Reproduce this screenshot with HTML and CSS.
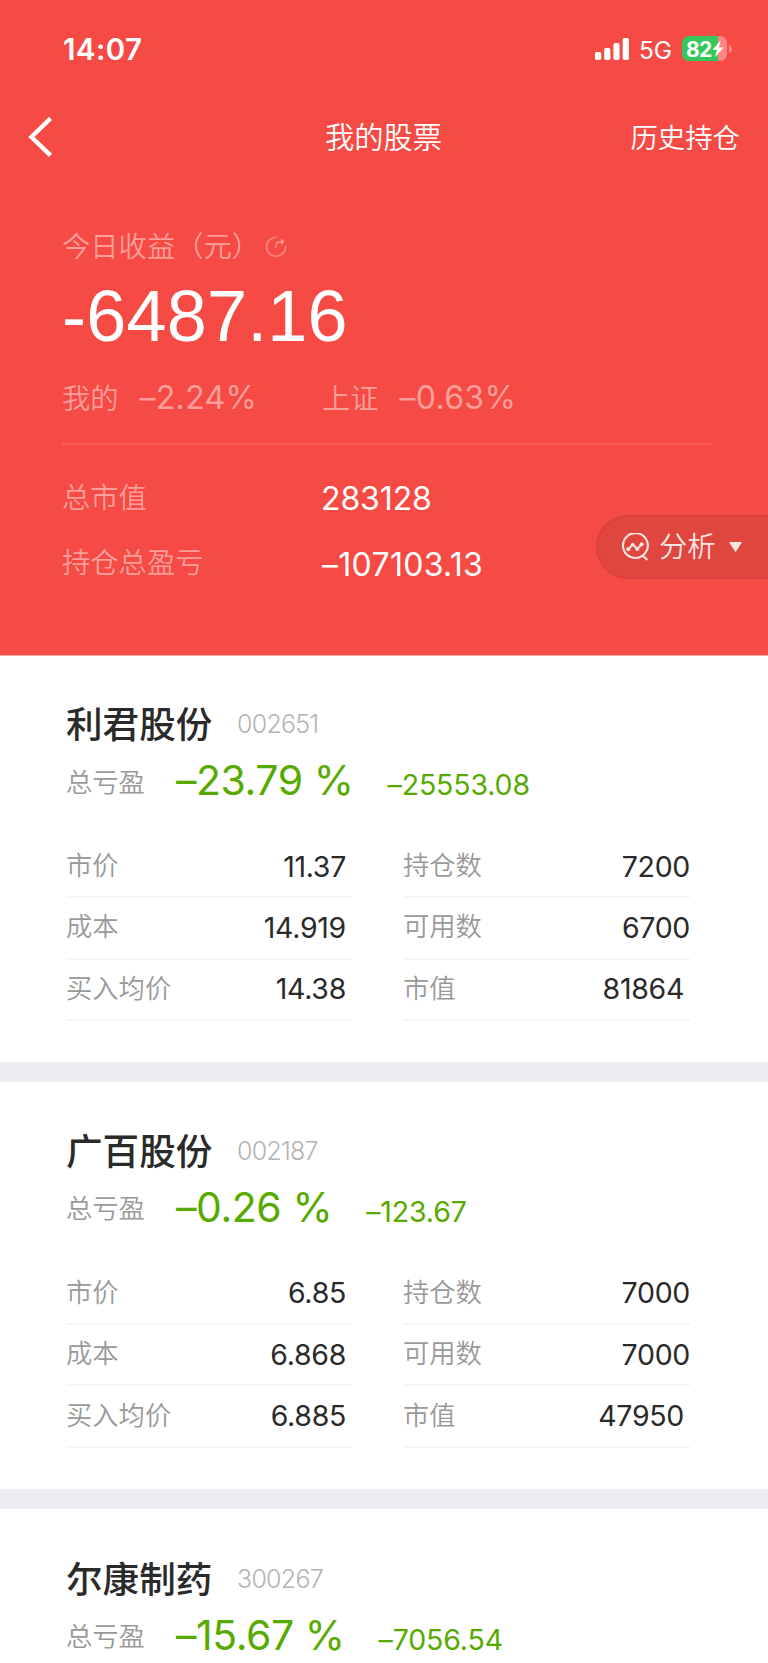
FILE: index.html
```html
<!DOCTYPE html>
<html lang="zh-CN">
<head>
<meta charset="utf-8">
<title>我的股票</title>
<link rel="stylesheet" href="styles.css">
</head>
<body>
<header class="hero">
  <div class="status">
    <span class="time">14:07</span>
    <svg class="signal" width="34" height="22" viewBox="0 0 34 22" fill="#fff"><rect x="0" y="14" width="6.2" height="8" rx="1.8"/><rect x="9.2" y="10" width="6.2" height="12" rx="1.8"/><rect x="18.4" y="5" width="6.2" height="17" rx="1.8"/><rect x="27.7" y="0" width="6.2" height="22" rx="1.8"/></svg>
    <span class="net">5G</span>
    <div class="battery">
      <span class="level">82</span>
      <svg class="bolt" width="12" height="18" viewBox="0 0 12 18"><path d="M8.6 0.5 0.4 9.8h4.5L3 17.3 11.6 7.6H6.9z" fill="#fff"/></svg>
    </div>
    <svg class="nub" width="3" height="8" viewBox="0 0 3 8"><path d="M0 0c4 1 4 7 0 8z" fill="#fff" fill-opacity=".35"/></svg>
  </div>
  <nav class="nav">
    <svg class="back" width="26" height="40" viewBox="0 0 26 40"><path d="M23.5 1.5 4.4 20 23.5 38.3" fill="none" stroke="#fff" stroke-width="4.4"/></svg>
    <h1 class="title">我的股票</h1>
    <a class="history">历史持仓</a>
  </nav>
  <section class="summary">
    <div class="today"><span>今日收益（元）</span>
      <svg class="refresh" width="22" height="22" viewBox="0 0 22 22" fill="none" stroke="#fff" stroke-opacity=".32" stroke-width="1.8"><path d="M11.5 1.3A9.5 9.5 0 1 0 20.5 10"/><path d="M10.8 12V10.5Q10.8 5.9 15 5.9H17.6"/><path d="M16.2 3 19.2 5.6 16.6 8.6z" fill="#fff" fill-opacity=".3" stroke-width=".8"/></svg>
    </div>
    <div class="profit">-6487.16</div>
    <div class="rates">
      <div class="rate"><span>我的</span><b class="num">–2.24%</b></div>
      <div class="rate"><span>上证</span><b class="num">–0.63%</b></div>
    </div>
    <div class="total first"><span>总市值</span><b class="num">283128</b></div>
    <div class="total"><span>持仓总盈亏</span><b class="num loss">–107103.13</b></div>
  </section>
  <button class="analyze">
    <svg width="28" height="28" viewBox="0 0 28 28" fill="none" stroke="#fbe4e2" stroke-width="2.1"><path d="M21.6 22.6A12.4 12.4 0 1 1 24.7 19.4Q23.6 21.2 21.6 22.6L26.4 27"/><path d="M7.5 16 11.8 11.5 16.3 16 20.6 11.3"/><g fill="#fbe4e2" stroke="none"><circle cx="7.3" cy="16.2" r="2"/><circle cx="11.8" cy="11.5" r="1.8"/><circle cx="16.3" cy="16.2" r="1.8"/><circle cx="20.7" cy="11.3" r="2"/></g></svg>
    <span>分析</span>
    <svg class="caret" width="13" height="10" viewBox="0 0 13 10"><path d="M.8 0h11.4q.8 0 .4.8L7.2 9.3q-.7 1-1.4 0L.4.8Q0 0 .8 0z" fill="#fbe4e2"/></svg>
  </button>
</header>
<main>
  <article class="stock">
    <div class="head"><h2>利君股份</h2><span class="code">002651</span></div>
    <div class="gain"><span class="label">总亏盈</span><span class="pct">–23.79 %</span><span class="amount">–25553.08</span></div>
    <div class="grid">
      <div class="cell"><span>市价</span><b>11.37</b></div><div class="cell right"><span>持仓数</span><b>7200</b></div>
      <div class="cell"><span>成本</span><b>14.919</b></div><div class="cell right"><span>可用数</span><b>6700</b></div>
      <div class="cell"><span>买入均价</span><b>14.38</b></div><div class="cell"><span>市值</span><b>81864</b></div>
    </div>
  </article>
  <article class="stock">
    <div class="head"><h2>广百股份</h2><span class="code">002187</span></div>
    <div class="gain"><span class="label">总亏盈</span><span class="pct">–0.26 %</span><span class="amount">–123.67</span></div>
    <div class="grid">
      <div class="cell"><span>市价</span><b>6.85</b></div><div class="cell right"><span>持仓数</span><b>7000</b></div>
      <div class="cell"><span>成本</span><b>6.868</b></div><div class="cell right"><span>可用数</span><b>7000</b></div>
      <div class="cell"><span>买入均价</span><b>6.885</b></div><div class="cell"><span>市值</span><b>47950</b></div>
    </div>
  </article>
  <article class="stock last">
    <div class="head"><h2>尔康制药</h2><span class="code">300267</span></div>
    <div class="gain"><span class="label">总亏盈</span><span class="pct">–15.67 %</span><span class="amount">–7056.54</span></div>
  </article>
</main>
</body>
</html>
```
FILE: styles.css
```css
* { box-sizing: border-box; }
body {
  margin: 0;
  width: 768px;
  height: 1663px;
  overflow: hidden;
  background: #fff;
  font-family: "Noto Sans CJK SC", sans-serif;
  font-weight: 350;
}
h1, h2, b { margin: 0; font-weight: inherit; }
svg { display: block; flex: none; }
span, b, h1, h2, a { white-space: nowrap; }

.hero { position: relative; height: 656px; background: #f64a45; border-bottom: 1px solid #fdaeac; color: #fff; }

/* status bar */
.status { display: flex; align-items: center; height: 98px; padding-left: 63px; font-family: Inter, sans-serif; }
.time { width: 532px; font-size: 29.5px; font-weight: 600; letter-spacing: 0.4px; }
.net { width: 43px; margin-left: 10px; font-size: 24.5px; font-weight: 400; letter-spacing: -0.2px; padding-top: 1px; }
.battery {
  display: flex; align-items: center; width: 45px; height: 25px; margin: -1px 0 0 0; padding-left: 4px;
  border-radius: 7px; background: linear-gradient(90deg, #35c759 36.5px, #fa8582 36.5px);
}
.level { width: 26px; font-size: 21px; line-height: 25px; font-weight: 700; letter-spacing: -0.7px; padding-top: 1px; }
.nub { margin-left: 2px; }

/* navigation */
.nav { display: grid; grid-template-columns: 200px 1fr 200px; align-items: center; height: 78px; padding: 0 28px 0 27px; }
.title { text-align: center; font-size: 29.3px; line-height: 40px; padding-bottom: 5px; }
.history { text-align: right; font-size: 27.4px; line-height: 40px; padding-bottom: 3px; }

/* summary */
.summary { padding: 46px 57px 0 62px; font-size: 28.3px; line-height: 48px; color: rgba(255,255,255,.47); }
.today { display: flex; align-items: center; height: 48px; }
.today span { padding-bottom: 2px; }
.refresh { margin: 2px 0 0 5px; }
.profit { height: 92px; font: 400 72px/92px "Liberation Sans", sans-serif; letter-spacing: 0.2px; color: #fff; }
.num { font-family: Inter, sans-serif; font-size: 32px; font-weight: 400; letter-spacing: -0.1px; }
.rates { display: flex; align-items: center; height: 83px; border-bottom: 2px solid rgba(255,255,255,.1); padding-bottom: 10px; }
.rate { display: flex; align-items: center; width: 260px; }
.rate .num { font-weight: 370; letter-spacing: 0.3px; }
.rate span { width: 77.5px; padding-bottom: 1px; }
.total { display: grid; grid-template-columns: 260px 1fr; align-items: center; height: 65px; }
.total.first { margin-top: 20px; }
.total span { padding-bottom: 4px; }
.total .num { color: #fff; padding-top: 3px; margin-left: -1px; }
.total .loss { letter-spacing: 0.3px; margin-left: 0; padding-top: 4px; }

.analyze {
  position: absolute; right: -2px; top: 515px; width: 174px; height: 64px; padding: 0 0 0 23px;
  display: flex; align-items: center; border: 2px solid #dc403c; border-radius: 32px 0 0 32px;
  background: #df463e; color: #fbe4e2; font: 350 28.3px/40px "Noto Sans CJK SC", sans-serif;
}
.analyze svg { margin-bottom: 1px; }
.analyze span { width: 80px; text-align: left; padding: 0 0 5px 10px; }

/* stock cards */
.stock { height: 426.8px; border-bottom: 20px solid #eeedf3; padding: 46px 78px 0 66px; }
.stock:first-child { height: 425.8px; padding-top: 45px; }
.stock.last { height: 154.4px; border: 0; overflow: hidden; padding-top: 47px; }
.head { display: flex; align-items: center; height: 42px; }
h2 { width: 171px; font-size: 36.6px; line-height: 42px; font-weight: 500; color: #2a2a2a; padding-top: 2px; }
.code { font-family: Inter, sans-serif; font-size: 25px; line-height: 42px; letter-spacing: -0.75px; color: #b4b4b4; padding-top: 4px; }
.gain { display: flex; align-items: center; height: 74px; color: #57aa00; font-family: Inter, sans-serif; }
.label { width: 110px; font: 350 26.3px/74px "Noto Sans CJK SC", sans-serif; color: #999; padding-top: 1px; }
.pct { font-size: 41px; font-weight: 390; letter-spacing: -0.45px; }
.amount { font-size: 28.5px; font-weight: 390; letter-spacing: -0.15px; margin-left: 34px; padding-top: 9px; }
.grid { display: grid; grid-template-columns: 286px 287px; column-gap: 51px; padding-top: 20px; }
.cell { display: flex; align-items: center; justify-content: space-between; height: 61.3px; border-bottom: 2px solid #f6f6f7; padding: 0 6px 4px 0; color: #999; font-size: 26.3px; }
.cell.right { padding-right: 0; }
.cell span { padding-bottom: 2px; }
.cell b { font-family: Inter, sans-serif; font-size: 28.5px; font-weight: 390; letter-spacing: -0.3px; color: #2a2a2a; padding-top: 3px; }
```
